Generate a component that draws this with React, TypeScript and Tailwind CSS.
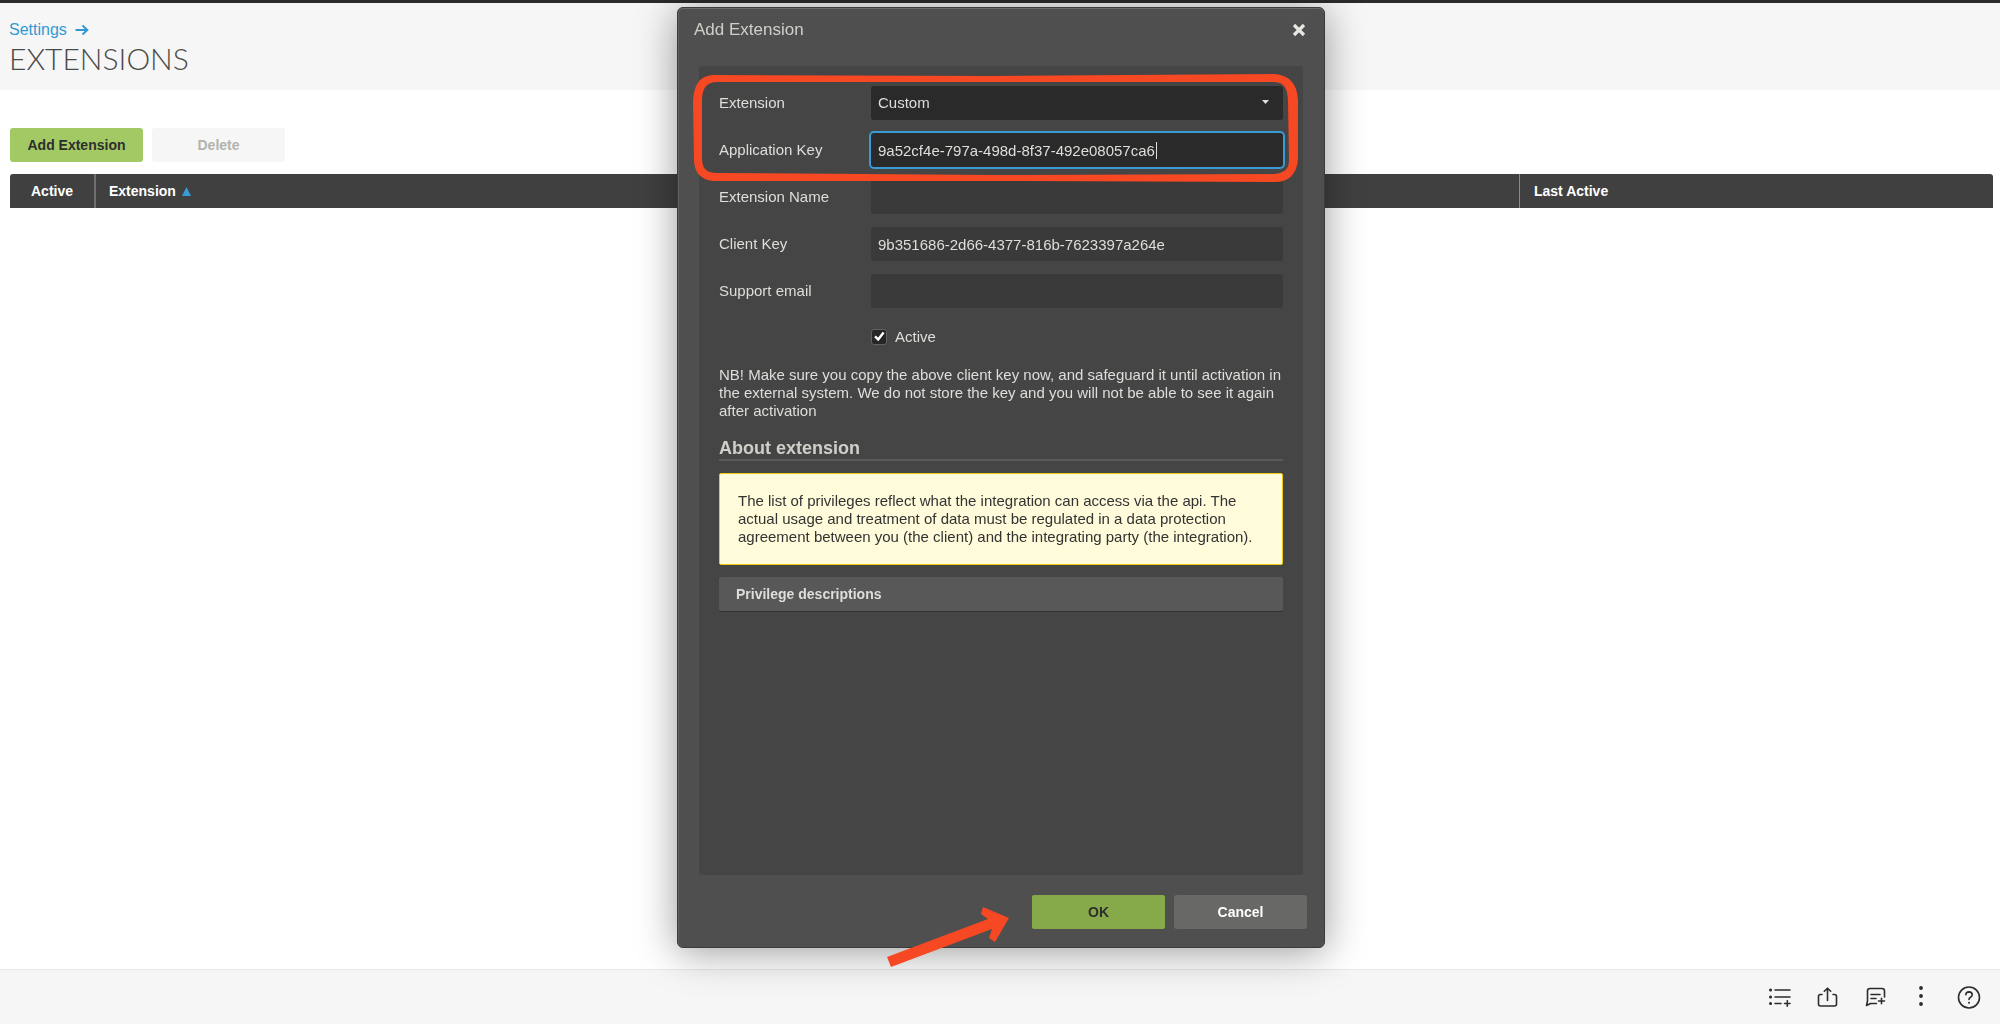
import type { ReactNode } from "react";

function FieldRow({ id, label, children }: { id: string; label: string; children: ReactNode }) {
  return (
    <div className="flex h-[34px] items-center">
      <label htmlFor={id} className="w-[152px] shrink-0">
        {label}
      </label>
      <div className="relative h-full flex-1">{children}</div>
    </div>
  );
}

const quietField =
  "h-full w-full rounded-[3px] bg-[#3a3a3a] px-[7px] text-[#dededa] outline-none";

function HighlightBox() {
  return (
    <svg
      className="pointer-events-none absolute left-[15px] top-[66px] overflow-visible"
      width="605"
      height="109"
      viewBox="0 0 605 109"
      aria-hidden="true"
    >
      <path
        fill="#f54823"
        fillRule="evenodd"
        d="M20 1 L300 2 L580 0 C596 1 604 9 605 26 L605 85 C604 100 596 108 582 108 L300 107 L20 107 C8 106 1 98 1 86 L0 28 C1 10 7 2 20 1 Z M24 8 C14 8 9 14 9 26 L9 84 C9 94 13 99 24 99 L300 101 L580 100 C591 99 596 96 596 86 L595 28 C595 14 591 8 580 8 L300 8 Z"
      />
    </svg>
  );
}

function PointerArrow() {
  return (
    <svg
      className="pointer-events-none absolute bottom-[-20px] left-[209px] overflow-visible"
      width="122"
      height="60"
      viewBox="0 0 122 60"
      aria-hidden="true"
    >
      <path
        fill="#f54823"
        d="M0 50 L101 12 L94 7 L96 0 L122 11 L108 35 L102 31 L105 22 L4 60 Z"
      />
    </svg>
  );
}

function Dialog() {
  return (
    <div className="fixed inset-0 flex justify-center pb-[76px] pl-0.5 pt-[7px]">
      <div
        role="dialog"
        aria-labelledby="dialog-title"
        className="relative flex w-[648px] flex-col rounded-md border border-[#3b3b3b] bg-[#4f4f4f] px-[21px] text-[15px] text-[#dededa] shadow-[inset_0_1px_0_#6b6b6b,inset_1px_0_0_#606060,0_4px_40px_rgba(0,0,0,0.4)]"
      >
        <header className="-mx-[5px] flex h-[58px] shrink-0 items-start justify-between pt-[11px]">
          <h2 id="dialog-title" className="text-[17px] leading-[22px] text-[#cfcfca]">
            Add Extension
          </h2>
          <button type="button" aria-label="Close" className="mt-[2px] p-0.5">
            <svg width="14" height="14" viewBox="0 0 14 14" aria-hidden="true">
              <path d="M2 2 L12 12 M12 2 L2 12" stroke="#e6e6e2" strokeWidth="3.2" />
            </svg>
          </button>
        </header>

        <div className="flex min-h-0 flex-1 flex-col rounded-[3px] bg-[#454545] px-[20px] pt-[20px]">
          <div className="flex flex-col gap-[13px]">
            <FieldRow id="extension" label="Extension">
              <select
                id="extension"
                className="h-full w-full appearance-none rounded-[3px] bg-[#2a2a2a] px-[7px] text-[#dededa] outline-none"
              >
                <option>Custom</option>
              </select>
              <svg
                className="pointer-events-none absolute right-[14px] top-[14px]"
                width="7"
                height="4"
                viewBox="0 0 7 4"
                aria-hidden="true"
              >
                <path d="M0 0 H7 L3.5 4 Z" fill="#dededa" />
              </svg>
            </FieldRow>
            <FieldRow id="app-key" label="Application Key">
              <input
                id="app-key"
                defaultValue="9a52cf4e-797a-498d-8f37-492e08057ca6"
                className="h-full w-full rounded-[3px] bg-[#2a2a2a] px-[7px] text-[#dededa] outline-none ring-2 ring-[#389bd6]"
              />
              <span className="absolute left-[285px] top-[9px] h-[17px] w-px bg-[#dededa]" />
            </FieldRow>
            <FieldRow id="ext-name" label="Extension Name">
              <input id="ext-name" className={quietField} />
            </FieldRow>
            <FieldRow id="client-key" label="Client Key">
              <input
                id="client-key"
                defaultValue="9b351686-2d66-4377-816b-7623397a264e"
                className={quietField}
              />
            </FieldRow>
            <FieldRow id="support-email" label="Support email">
              <input id="support-email" type="email" className={quietField} />
            </FieldRow>
          </div>

          <div className="relative ml-[152px] mt-[20px] flex h-[18px] items-center gap-[8px]">
            <input
              id="active"
              type="checkbox"
              defaultChecked
              className="size-[16px] appearance-none rounded-[3px] border border-[#606060] bg-[#262626]"
            />
            <svg
              className="pointer-events-none absolute left-[3px] top-[3px]"
              width="11"
              height="11"
              viewBox="0 0 11 11"
              aria-hidden="true"
            >
              <path d="M1 5.4 L4.2 8.4 L9.6 1.6" fill="none" stroke="#ffffff" strokeWidth="2.4" />
            </svg>
            <label htmlFor="active">Active</label>
          </div>

          <p className="mt-[20px] leading-[18px]">
            NB! Make sure you copy the above client key now, and safeguard it until activation in
            the external system. We do not store the key and you will not be able to see it again
            after activation
          </p>

          <h3 className="mt-[17px] border-b-2 border-[#5a5a5a] text-[18px] font-bold leading-[22px] text-[#cfcfca]">
            About extension
          </h3>

          <p className="mt-[12px] rounded-[2px] border border-[#ecca10] bg-[#fffbdb] px-[18px] py-[18px] leading-[18px] text-[#333333]">
            The list of privileges reflect what the integration can access via the api. The actual
            usage and treatment of data must be regulated in a data protection agreement between
            you (the client) and the integrating party (the integration).
          </p>

          <button
            type="button"
            className="mt-[12px] h-[34px] rounded-[2px] bg-[#585858] px-[17px] text-left text-[14px] font-bold shadow-[0_1px_0_#333333]"
          >
            Privilege descriptions
          </button>
        </div>

        <footer className="-mr-[4px] flex h-[72px] shrink-0 items-start justify-end gap-[9px] pt-[20px] text-[14px] font-bold">
          <button type="button" className="h-[34px] w-[133px] rounded-[2px] bg-[#86aa4a] text-[#2e2e2e]">
            OK
          </button>
          <button type="button" className="h-[34px] w-[133px] rounded-[3px] bg-[#686867] text-white">
            Cancel
          </button>
        </footer>

        <HighlightBox />
        <PointerArrow />
      </div>
    </div>
  );
}

function Toolbar() {
  const stroke = {
    fill: "none",
    stroke: "#2d2d2d",
    strokeWidth: 1.6,
    strokeLinecap: "round" as const,
    strokeLinejoin: "round" as const,
  };
  return (
    <footer className="flex h-[55px] shrink-0 items-center justify-end gap-[23px] border-t border-[#e8e8e8] bg-[#f6f6f6] pr-[18px]">
      <button type="button" aria-label="Add to list">
        <svg width="25" height="24" viewBox="0 0 25 24" {...stroke}>
          <path d="M8 5 H23 M8 12 H23 M8 18.5 H14 M17.5 18.5 H23 M20.3 15.7 V21.3" />
          <path d="M3.5 5 H3.6 M3.5 12 H3.6 M3.5 18.5 H3.6" strokeWidth="3" />
        </svg>
      </button>
      <button type="button" aria-label="Share">
        <svg width="25" height="24" viewBox="0 0 25 24" {...stroke}>
          <path d="M7 9.5 H5.5 Q3.5 9.5 3.5 11.5 V19 Q3.5 21 5.5 21 H19.5 Q21.5 21 21.5 19 V11.5 Q21.5 9.5 19.5 9.5 H18 M12.5 15.5 V3.5 M9.3 6.3 L12.5 3.2 L15.7 6.3" />
        </svg>
      </button>
      <button type="button" aria-label="Add note">
        <svg width="25" height="24" viewBox="0 0 25 24" {...stroke}>
          <path d="M21.5 12 V6 Q21.5 3.5 19 3.5 H7 Q4.5 3.5 4.5 6 V16 L3.5 20.5 L7.5 18.5 H13.5 M8 9.5 H17 M8 13.5 H13 M15.5 16 H21.5 M18.5 13.2 V18.8" />
        </svg>
      </button>
      <button type="button" aria-label="More">
        <svg width="20" height="24" viewBox="0 0 20 24" fill="#2d2d2d">
          <circle cx="10" cy="3" r="1.9" />
          <circle cx="10" cy="11" r="1.9" />
          <circle cx="10" cy="19" r="1.9" />
        </svg>
      </button>
      <button type="button" aria-label="Help">
        <svg width="28" height="24" viewBox="-2 0 28 24" {...stroke}>
          <circle cx="13" cy="12.5" r="10.5" />
          <path d="M9.8 9.8 Q10 6.9 13 6.9 Q16.2 7 16.2 9.7 Q16.2 11.3 14.5 12.2 Q13 13 13 14.5" />
          <path d="M13 17.7 V17.8" strokeWidth="2" />
        </svg>
      </button>
    </footer>
  );
}

export default function App() {
  return (
    <div className="flex min-h-screen flex-col bg-white font-['Liberation_Sans',Arial,sans-serif] text-[14px] text-[#333333]">
      <header className="h-[90px] shrink-0 border-t-3 border-[#2d2a2b] bg-[#f6f6f6] pl-[9px] pt-[17px]">
        <a href="#settings" className="flex w-fit items-center gap-[8px] text-[16px] leading-[20px] text-[#3299d4]">
          Settings
          <svg width="14" height="12" viewBox="0 0 14 12" aria-hidden="true">
            <path d="M0.5 6 H12 M7.5 1.5 L12.3 6 L7.5 10.5" fill="none" stroke="#3299d4" strokeWidth="2" />
          </svg>
        </a>
        <h1 className="font-['Lato',sans-serif] text-[30px] font-light leading-[36px] text-[#4a4a48]">
          EXTENSIONS
        </h1>
      </header>

      <main className="flex-1 pl-[10px] pr-[7px] pt-[38px]">
        <div className="flex gap-[9px] font-bold">
          <button type="button" className="h-[34px] w-[133px] rounded-[3px] bg-[#a3c965] text-[#2e2e2e]">
            Add Extension
          </button>
          <button type="button" disabled className="h-[34px] w-[133px] rounded-[3px] bg-[#f6f6f6] text-[#b3b3ae]">
            Delete
          </button>
        </div>
        <table className="mt-[12px] w-full table-fixed border-separate border-spacing-0 overflow-hidden rounded-t-[3px] bg-[#404040] text-left text-white">
          <thead>
            <tr className="h-[34px]">
              <th scope="col" className="w-[86px] border-r-2 border-[#6f6f6f] text-center">
                Active
              </th>
              <th scope="col" className="border-r border-[#8a8a8a] pl-[13px]">
                <span className="flex items-center gap-[6px]">
                  Extension
                  <svg width="9" height="9" viewBox="0 0 9 9" aria-hidden="true">
                    <path d="M4.5 0 L9 9 H0 Z" fill="#389bd6" />
                  </svg>
                </span>
              </th>
              <th scope="col" className="w-[473px] pl-[14px]">
                Last Active
              </th>
            </tr>
          </thead>
        </table>
      </main>

      <Toolbar />
      <Dialog />
    </div>
  );
}
